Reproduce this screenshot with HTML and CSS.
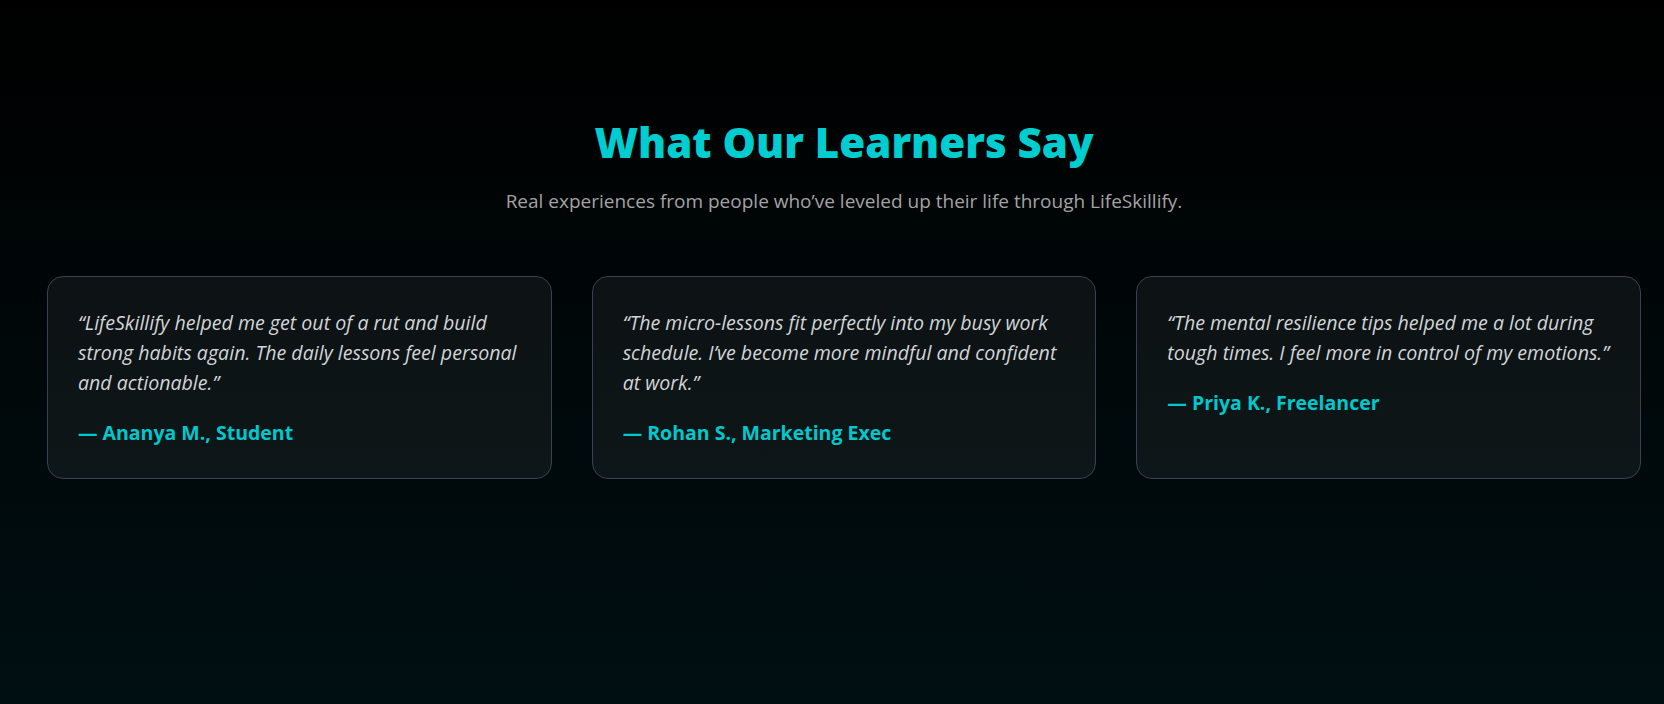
FILE: index.html
```html
<!DOCTYPE html>
<html lang="en">
<head>
<meta charset="utf-8">
<title>What Our Learners Say</title>
<link rel="stylesheet" href="styles.css">
</head>
<body>
<section class="testimonials">
  <h2 class="title">What Our Learners Say</h2>
  <p class="subtitle">Real experiences from people who’ve leveled up their life through LifeSkillify.</p>
  <div class="grid">
    <div class="card">
      <p class="quote">“LifeSkillify helped me get out of a rut and build strong habits again. The daily lessons feel personal and actionable.”</p>
      <p class="author">— Ananya M., Student</p>
    </div>
    <div class="card">
      <p class="quote">“The micro-lessons fit perfectly into my busy work schedule. I’ve become more mindful and confident at work.”</p>
      <p class="author">— Rohan S., Marketing Exec</p>
    </div>
    <div class="card">
      <p class="quote">“The mental resilience tips helped me a lot during tough times. I feel more in control of my emotions.”</p>
      <p class="author">— Priya K., Freelancer</p>
    </div>
  </div>
</section>
</body>
</html>
```
FILE: styles.css
```css
html, body {
  margin: 0;
  padding: 0;
  height: 100%;
}
body {
  background: linear-gradient(180deg, #000000 0%, #000f12 100%);
  font-family: "Open Sans", "Noto Sans", sans-serif;
  color: #cfd3d6;
  overflow: hidden;
}
.testimonials {
  box-sizing: border-box;
  min-height: 704px;
  padding: 117px 23px 0 47px;
  display: flex;
  flex-direction: column;
  align-items: center;
}
.title {
  margin: 0;
  font-size: 42px;
  font-weight: 800;
  line-height: 50px;
  color: #00cdd0;
}
.subtitle {
  margin: 21px 0 0;
  font-size: 19px;
  line-height: 26px;
  color: #a3a3a3;
}
.grid {
  margin-top: 62px;
  align-self: stretch;
  display: grid;
  grid-template-columns: repeat(3, 1fr);
  gap: 40px;
}
.card {
  box-sizing: border-box;
  min-height: 202px;
  padding: 31px 24px 30px 30px;
  background: rgba(255, 255, 255, 0.05);
  border: 1px solid #3a414f;
  border-radius: 16px;
}
.quote {
  margin: 0;
  font-size: 19.6px;
  font-style: italic;
  line-height: 30px;
  color: #d2d5d8;
}
.author {
  margin: 20px 0 0;
  font-size: 19.5px;
  font-weight: 700;
  line-height: 30px;
  color: #00c8cc;
}
```
